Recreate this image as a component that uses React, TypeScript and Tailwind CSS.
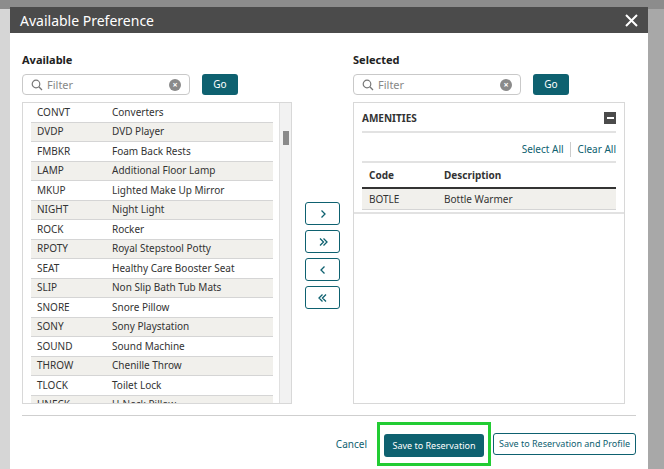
import React from "react";

const rows: [string, string][] = [
  ["CONVT", "Converters"], ["DVDP", "DVD Player"], ["FMBKR", "Foam Back Rests"], ["LAMP", "Additional Floor Lamp"],
  ["MKUP", "Lighted Make Up Mirror"], ["NIGHT", "Night Light"], ["ROCK", "Rocker"], ["RPOTY", "Royal Stepstool Potty"],
  ["SEAT", "Healthy Care Booster Seat"], ["SLIP", "Non Slip Bath Tub Mats"], ["SNORE", "Snore Pillow"], ["SONY", "Sony Playstation"],
  ["SOUND", "Sound Machine"], ["THROW", "Chenille Throw"], ["TLOCK", "Toilet Lock"], ["UNECK", "U-Neck Pillow"],
];

const Filter = ({ clear }: { clear: boolean }) => (
  <div className="flex items-center gap-2">
    <div className="flex items-center w-[168px] h-[21px] border border-[#c9c9c9] rounded-[4px] px-2 gap-1">
      <svg width="12" height="12" viewBox="0 0 12 12"><circle cx="5" cy="5" r="3.8" fill="none" stroke="#777" strokeWidth="1.2"/><path d="M7.8 7.8L11 11" stroke="#777" strokeWidth="1.3"/></svg>
      <span className="text-[11px] text-[#888] flex-1 pt-[2px]">Filter</span>
      {clear && <span className="w-[12px] h-[12px] rounded-full bg-[#8a8a8a] text-white text-[9px] leading-[12px] text-center font-bold">×</span>}
    </div>
    <button className="ml-[4px] w-[36px] h-[21px] bg-[#0e6170] rounded-[3px] text-white text-[10px]">Go</button>
  </div>
);

const ArrowBtn = ({ d }: { d: string }) => (
  <button className="w-[35px] h-[23px] border border-[#0e6170] rounded-[3px] flex items-center justify-center bg-white">
    <svg width="12" height="12" viewBox="0 0 12 12" fill="none" stroke="#0e6170" strokeWidth="1.3"><path d={d} /></svg>
  </button>
);

export default function App() {
  return (
    <div className="relative w-[664px] h-[469px] bg-[#8c8c8c] overflow-hidden" style={{ fontFamily: "'Noto Sans', 'Open Sans', sans-serif" }}>
      <div className="absolute left-0 top-[9px] w-[10px] h-[460px] bg-[#d6d6d6]" />
      <div className="absolute right-0 top-[9px] w-[16px] h-[460px] bg-[#a8a8a8]" />
      <div className="absolute left-[10px] top-[7px] w-[638px] h-[462px] bg-white flex flex-col">
        <div className="h-[26px] bg-[#4b4b4b] flex items-center justify-between px-[10px] shrink-0">
          <span className="text-white text-[14px]">Available Preference</span>
          <svg width="13" height="13" viewBox="0 0 13 13" stroke="white" strokeWidth="2"><path d="M1 1L12 12M12 1L1 12"/></svg>
        </div>
        <div className="flex px-[12px] pt-[20px] h-[382px]">
          <div className="flex flex-col w-[270px]">
            <div className="text-[11px] font-bold text-[#222] h-[14px] leading-[14px] mb-[7px]">Available</div>
            <Filter clear />
            <div className="mt-[7px] flex border border-[#d8d8d8] h-[302px] overflow-hidden">
              <div className="flex-1 pl-[8px] pt-0">
                {rows.map(([c, d], i) => (
                  <div key={c} className={`flex h-[19.5px] items-center border-b border-[#d5d5d5] text-[10px] text-[#333] ${i % 2 ? "bg-[#f1f0ec]" : ""}`}>
                    <span className="w-[81px] pl-[6px]">{c}</span><span>{d}</span>
                  </div>
                ))}
              </div>
              <div className="w-[12px] bg-[#f2f2f2] border-l border-[#e0e0e0] relative ml-[6px]">
                <div className="absolute left-[3px] top-[28px] w-[6px] h-[14px] bg-[#8a8a8a]" />
              </div>
            </div>
          </div>
          <div className="w-[61px] flex flex-col items-center gap-[5px] pt-[149px]">
            <ArrowBtn d="M4.5 2.5L8 6L4.5 9.5" />
            <ArrowBtn d="M3 2.5L6.5 6L3 9.5M6.5 2.5L10 6L6.5 9.5" />
            <ArrowBtn d="M7.5 2.5L4 6L7.5 9.5" />
            <ArrowBtn d="M9 2.5L5.5 6L9 9.5M5.5 2.5L2 6L5.5 9.5" />
          </div>
          <div className="flex flex-col w-[272px]">
            <div className="text-[11px] font-bold text-[#222] h-[14px] leading-[14px] mb-[7px]">Selected</div>
            <Filter clear />
            <div className="mt-[7px] border border-[#d8d8d8] h-[302px] px-[8px]">
              <div className="flex items-center justify-between h-[30px] pt-[2px] border-b-2 border-[#e2e2e2]">
                <span className="text-[10px] font-bold text-[#333]">AMENITIES</span>
                <span className="w-[12px] h-[12px] bg-[#4b4b4b] flex items-center justify-center"><span className="w-[7px] h-[1.5px] bg-white" /></span>
              </div>
              <div className="flex justify-end items-center h-[30px] pt-[4px] text-[10px] text-[#0e6170] border-b-2 border-[#e2e2e2]">
                <span className="pr-[6px] border-r border-[#ccc]">Select All</span><span className="pl-[7px]">Clear All</span>
              </div>
              <div className="flex h-[26px] items-center text-[10px] font-bold text-[#333] border-b-2 border-[#333]">
                <span className="w-[82px] pl-[7px]">Code</span><span>Description</span>
              </div>
              <div className="flex h-[21px] items-center text-[10px] text-[#333] bg-[#f1f0ec] border-b border-[#d5d5d5]">
                <span className="w-[82px] pl-[7px]">BOTLE</span><span>Bottle Warmer</span>
              </div>
              <div className="-mx-[8px] mt-[2px] border-b-2 border-[#e2e2e2]" />
            </div>
          </div>
        </div>
        <div className="mx-[12px] border-t border-[#cfcfcf] mt-[0px]" />
        <div className="flex justify-end items-center pr-[12px] pt-[6px] gap-[2px]">
          <span className="text-[10px] text-[#0e6170] mr-[8px]">Cancel</span>
          <div className="border-[3px] border-[#22cc33] px-[4px] py-[6px]">
            <button className="w-[100px] h-[23px] bg-[#0e6170] rounded-[3px] text-white text-[9px]">Save to Reservation</button>
          </div>
          <button className="w-[143px] h-[22px] border border-[#0e6170] rounded-[3px] text-[#0e6170] text-[9px] bg-white">Save to Reservation and Profile</button>
        </div>
      </div>
    </div>
  );
}
